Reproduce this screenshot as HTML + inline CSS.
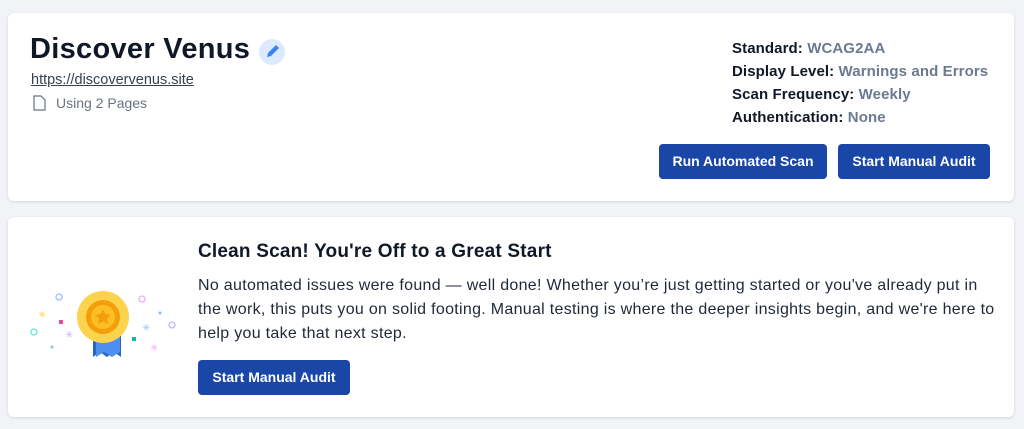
<!DOCTYPE html>
<html><head><style>
body{margin:0;background:#f1f3f7;font-family:"Liberation Sans",sans-serif;width:1024px;height:429px;position:relative;overflow:hidden}
.card{position:absolute;left:8px;width:1006px;background:#fff;border-radius:6px;box-shadow:0 1px 3px rgba(0,0,0,.12)}
.btn{position:absolute;background:#1a46a8;color:#fff;font-size:14px;font-weight:bold;border-radius:4px;height:35px;line-height:35px;text-align:center}
.meta{position:absolute;left:724px;top:24px;font-size:15px;line-height:23px;color:#111827;font-weight:bold;letter-spacing:0.1px}
.meta span{color:#6b7a90}
</style></head><body>
<div class="card" style="top:13px;height:188px">
 <div style="position:absolute;left:22px;top:20px;font-size:29px;font-weight:bold;color:#101828;letter-spacing:0.3px">Discover Venus</div>
 <div style="position:absolute;left:251px;top:26px;width:26px;height:26px;border-radius:50%;background:#dbeafe">
  <svg width="26" height="26" viewBox="0 0 26 26"><path d="M8 18l1-4 8-8 3 3-8 8z" fill="#3b82f6"/></svg></div>
 <div style="position:absolute;left:23px;top:59px;font-size:14.5px;color:#374151;text-decoration:underline">https://discovervenus.site</div>
 <svg style="position:absolute;left:25px;top:82px" width="13" height="16" viewBox="0 0 13 16"><path d="M1 1h7l4 4v10H1z" fill="none" stroke="#6b7280" stroke-width="1.2"/></svg>
 <div style="position:absolute;left:48px;top:82px;font-size:14px;color:#6b7280">Using 2 Pages</div>
 <div class="meta">Standard: <span>WCAG2AA</span><br>Display Level: <span>Warnings and Errors</span><br>Scan Frequency: <span>Weekly</span><br>Authentication: <span>None</span></div>
 <div class="btn" style="left:651px;top:131px;width:168px">Run Automated Scan</div>
 <div class="btn" style="left:830px;top:131px;width:152px">Start Manual Audit</div>
</div>
<div class="card" style="top:217px;height:200px">
 <svg style="position:absolute;left:12px;top:50px" width="170" height="110" viewBox="0 0 170 110">
  <path d="M73 65v25l7-5 7 5V65zM87 65v25l7-5 7 5V65z" fill="#2563c9"/>
  <path d="M76 68v22l8-5 8 5 8-5V68z" fill="#4d8ef0"/>
  <circle cx="83" cy="50" r="26" fill="#fcd34d"/>
  <circle cx="83" cy="50" r="17" fill="#f59e0b"/>
  <circle cx="83" cy="50" r="12" fill="#fbbf24"/>
  <path d="M83 42l2.5 5 5.5.8-4 3.8 1 5.5-5-2.6-5 2.6 1-5.5-4-3.8 5.5-.8z" fill="#f59e0b"/>
  <circle cx="39" cy="30" r="3" fill="none" stroke="#93c5fd" stroke-width="1.3"/>
  <circle cx="122" cy="32" r="3" fill="none" stroke="#f0abfc" stroke-width="1.3"/>
  <circle cx="14" cy="65" r="3" fill="none" stroke="#5eead4" stroke-width="1.3"/>
  <circle cx="152" cy="58" r="3" fill="none" stroke="#c4b5fd" stroke-width="1.3"/>
  <rect x="39" y="53" width="4" height="4" fill="#ec4899"/>
  <rect x="112" y="70" width="4" height="4" fill="#14b8a6"/>
  <path d="M32 78l2 2-2 2-2-2zM140 44l2 2-2 2-2-2z" fill="#93c5fd"/>
  <text x="18" y="51" font-size="10" fill="#fcd34d">✳</text>
  <text x="45" y="71" font-size="10" fill="#c4b5fd">✳</text>
  <text x="122" y="64" font-size="10" fill="#93c5fd">✳</text>
  <text x="130" y="84" font-size="10" fill="#f0abfc">✳</text>
 </svg>
 <div style="position:absolute;left:190px;top:24px;font-size:19px;font-weight:bold;color:#101828;letter-spacing:0.2px">Clean Scan! You're Off to a Great Start</div>
 <div style="position:absolute;left:190px;top:57px;width:810px;font-size:16px;line-height:24px;color:#1f2937;white-space:nowrap;letter-spacing:0.3px">No automated issues were found — well done! Whether you’re just getting started or you've already put in<br>the work, this puts you on solid footing. Manual testing is where the deeper insights begin, and we're here to<br>help you take that next step.</div>
 <div class="btn" style="left:190px;top:143px;width:152px">Start Manual Audit</div>
</div>
</body></html>
